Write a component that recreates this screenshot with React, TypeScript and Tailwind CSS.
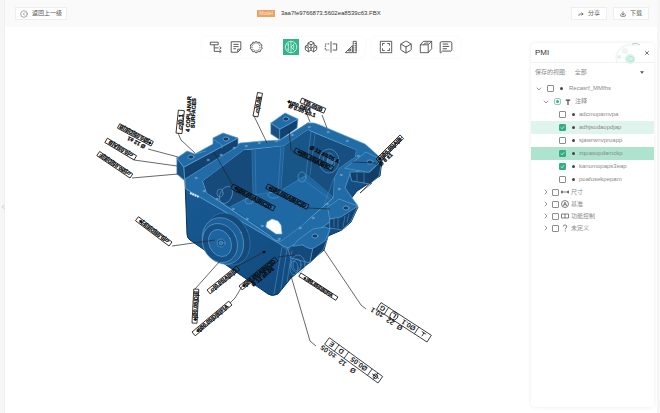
import {
  Box,
  ChevronDown,
  ChevronLeft,
  ChevronRight,
  CircleChevronLeft,
  Download,
  Forward,
  MessageSquareText,
  X,
} from 'lucide-react'
import { ReactNode } from 'react'

interface IconProps {
  children: ReactNode
}

function Icon({ children }: IconProps) {
  return (
    <svg
      viewBox="0 0 16 16"
      className="size-3.5"
      fill="none"
      stroke="currentColor"
      strokeWidth="1"
      aria-hidden="true"
    >
      {children}
    </svg>
  )
}

const toolGroups = [
  [
    {
      name: '结构',
      icon: (
        <Icon>
          <path d="M1.500 2.500h9v3h-9zM6 5.500v7.500h7M6 9h5M12 7.500l2 1.500-2 1.500M12 11.500l2 1.500-2 1.500" />
        </Icon>
      ),
    },
    {
      name: '备注',
      icon: (
        <Icon>
          <path d="M2.500 2h11v8.500L10 14H2.500zM13.500 10.500H10V14M5 5h6M5 7.500h6M5 10h3" />
        </Icon>
      ),
    },
    {
      name: '设置',
      icon: (
        <Icon>
          <path d="M8 1.500l1.800 1.300 2.200-.3.800 2.100 2 1-.5 2.200.8 2.100-1.900 1.200-.5 2.200-2.200 0L8 14.700l-1.800-1.400-2.200 0-.7-2.200-1.900-1.200.7-2.100-.5-2.200 2-1 .8-2.100 2.200.3z" />
          <circle cx="8" cy="8" r="4.500" strokeDasharray="1.500 1" />
        </Icon>
      ),
    },
  ],
  [
    {
      name: 'PMI',
      active: true,
      icon: (
        <Icon>
          <circle cx="8" cy="8" r="6.500" />
          <path d="M5 3.500v9M8 1.500v13M8 8l4-4M8 8l4 4M3 5.500h2M3 10.500h2M11 6v4" />
        </Icon>
      ),
    },
    {
      name: '装配',
      icon: (
        <Icon>
          <path d="M8 1.500l3.500 2v4L8 9.500l-3.500-2v-4zM4.500 3.500L8 5.500l3.500-2M8 5.500v4" />
          <path d="M4.500 5.500l-3 1.500v4l3.500 2.500 3-2V9.500M11.500 5.500l3 1.500v4L11 13.500l-3-2M1.500 7.500L5 9.500v4M14.500 7.500L11 9.500v4" />
        </Icon>
      ),
    },
    {
      name: '剖切',
      icon: (
        <Icon>
          <path d="M8 1.500v13M10 4.500h4.500v7H10" />
          <path d="M6 4.500H1.500v7H6" strokeDasharray="2 1" />
        </Icon>
      ),
    },
    {
      name: '测量',
      icon: (
        <Icon>
          <path d="M10.500 1.500h3.500v13h-3.500zM12 4h2M12 6.500h2M12 9h2M12 11.500h2M1.500 14.500h8v-8zM5 12.500h2.500V10z" />
        </Icon>
      ),
    },
  ],
  [
    {
      name: '全屏',
      icon: (
        <Icon>
          <path d="M1.500 1.500h13v13h-13zM4 6.500V4h2.500M9.500 4H12v2.500M12 9.500V12H9.500M6.500 12H4V9.500" />
        </Icon>
      ),
    },
    { name: '视图', icon: <Box className="size-3.5" strokeWidth={1.6} /> },
    {
      name: '透视',
      icon: (
        <Icon>
          <path d="M1.500 5.500h9v9h-9zM1.500 5.500l3.500-4h9.500l-4 4M14.500 1.500v8.500l-4 4.500M5 5.500l2-2h4" />
        </Icon>
      ),
    },
    {
      name: '评论',
      icon: <MessageSquareText className="size-3.5" strokeWidth={1.6} />,
    },
  ],
]

function Toolbar() {
  return (
    <div className="flex gap-[7px]">
      {toolGroups.map((group, index) => (
        <div
          key={index}
          className="flex items-center gap-1 rounded-sm bg-white px-1.5 py-0.5 shadow-[0_0_3px_#0000000d]"
        >
          {group.map((tool) => (
            <button
              key={tool.name}
              aria-label={tool.name}
              className={
                'active' in tool
                  ? 'flex size-4 items-center justify-center bg-[#36b489] text-[#c9f3e2]'
                  : 'flex size-4 items-center justify-center text-[#484848]'
              }
            >
              {tool.icon}
            </button>
          ))}
        </div>
      ))}
    </div>
  )
}

interface TagProps {
  x: number
  y: number
  angle: number
  width: number
  height?: number
  text: string
  framed?: boolean
}

function Tag({ x, y, angle, width, height = 5, text, framed = true }: TagProps) {
  return (
    <g transform={`translate(${x} ${y}) rotate(${angle})`}>
      {framed && (
        <rect
          width={width}
          height={height}
          fill="none"
          stroke="#111"
          strokeWidth="0.8"
        />
      )}
      <text
        x={width / 2}
        y={height - 0.5}
        fontSize={height + 0.5}
        fontWeight="700"
        textAnchor="middle"
        fill="#080a0d"
        stroke="#080a0d"
        strokeWidth="0.3"
      >
        {text}
      </text>
    </g>
  )
}

// x / y is the corner the tag turns around, angles are in degrees
const tags: TagProps[] = [
  { x: 151, y: 146, angle: 208, width: 38, text: '⌖|Ø0.05|D|E|B' },
  { x: 143, y: 149, angle: 208, width: 18, text: 'Ø 12 ±1', framed: false },
  { x: 134, y: 160, angle: 211, width: 34, text: '▱|0.05|A|B' },
  { x: 130, y: 178, angle: 214, width: 40, text: '▱|Ø0.05|D|E|F' },
  { x: 176, y: 133, angle: -84, width: 23, height: 6, text: '▱|0.1' },
  { x: 185, y: 131, angle: -87, width: 34, text: '4 COPLANAR', framed: false },
  { x: 190, y: 127, angle: -87, width: 28, text: 'SURFACES', framed: false },
  { x: 253, y: 116, angle: -79, width: 24, text: '▱|0.08' },
  { x: 302, y: 98, angle: 24, width: 26, text: 'T|0.05|B' },
  { x: 285, y: 98, angle: 20, width: 32, text: '⌖|Ø0.08|A', framed: false },
  { x: 286, y: 102, angle: 20, width: 36, text: 'Ø 0.05 ±0.1', framed: false },
  { x: 376, y: 159, angle: -45, width: 34, text: '⌖|Ø0.05|A|B' },
  { x: 378, y: 163, angle: -43, width: 16, text: 'Ø 8 ±1', framed: false },
  { x: 169, y: 246, angle: 217, width: 42, text: '▱|0.05|D|E|F|⌖' },
  { x: 207, y: 290, angle: -39, width: 38, text: '▱|0.05|A|B|D' },
  { x: 192, y: 323, angle: -87, width: 34, text: '⌖|Ø0.05|D|E' },
  { x: 192, y: 332, angle: -40, width: 48, text: '⌖|Ø0.05|D|E|F|A' },
  { x: 239, y: 286, angle: -39, width: 46, text: '⌖|Ø0.05|A|B|C|D' },
  { x: 247, y: 286, angle: -39, width: 36, text: 'Ø 12 ±0.05', framed: false },
  { x: 301, y: 273, angle: 33, width: 44, height: 4, text: '⌖|Ø0.05|D|E|F|A' },
  { x: 296, y: 148, angle: 26, width: 42, text: '⌖|Ø0.05|A|B|C' },
  { x: 308, y: 143, angle: 27, width: 40, text: 'Ø 12 ±0.05 A', framed: false },
  { x: 268, y: 184, angle: 27, width: 46, text: '⌖|Ø0.05|A|B|C|D' },
  { x: 233, y: 184, angle: 28, width: 48, text: '⌖|Ø0.05|A|B|C|D' },
]

const leaders = [
  '148,149 178,157',
  '134,160 177,166',
  '132,178 178,174',
  '178,133 181,140 195,153',
  '254,116 267,143',
  '304,107 310,122',
  '322,115 327,128',
  '376,163 352,162',
  '402,137 376,165',
  '372,183 360,193 378,175',
  '172,246 215,240',
  '195,289 220,261',
  '236,267 266,251',
  '230,303 235,298 246,280',
  '214,152 232,184',
  '289,130 291,150 296,153',
  '308,208 330,209',
  '324,250 361,305 366,309',
  '291,276 310,341 316,346',
  '278,257 294,255',
]

const holes = [
  [226, 139, 3],
  [191, 157, 3],
  [286, 119, 3],
  [370, 162, 3],
  [346, 208, 3],
  [315, 236, 3],
]

const bolts = [
  [208, 160], [221, 155], [234, 148], [246, 146], [259, 143], [276, 141],
  [292, 135], [309, 127], [328, 132], [347, 141], [358, 156], [341, 175],
  [339, 189], [196, 178], [204, 191], [217, 199], [233, 209], [247, 219],
  [262, 226], [279, 239], [300, 228], [313, 218], [327, 204],
]

function Model() {
  return (
    <svg
      viewBox="5 27 652 386"
      className="col-start-1 row-start-1 w-full"
      fontFamily="Liberation Sans, DejaVu Sans, sans-serif"
      role="img"
      aria-label="3D"
    >
      <defs>
        <linearGradient id="front" x1="0" y1="0" x2="1" y2="1">
          <stop offset="0" stopColor="#1a5f9b" />
          <stop offset="1" stopColor="#0f4373" />
        </linearGradient>
        <linearGradient id="wall" x1="0" y1="0" x2="0" y2="1">
          <stop offset="0" stopColor="#165184" />
          <stop offset="1" stopColor="#1c65a0" />
        </linearGradient>
      </defs>

      <g strokeLinejoin="round" strokeLinecap="round">
        {/* body silhouette */}
        <path
          d="M185 180L187 234Q187 238 190 240L268 294Q272 297 278 294L291 278L310 262L324 250L328 236L342 230L351 222L358 207L350 200L357 191L380 176L382 160L365 145L308 123L280 142L240 146L185 172z"
          fill="url(#front)"
          stroke="#0b3154"
          strokeWidth="1"
        />
        {/* top flange */}
        <path
          d="M185 172L240 143L263 141L280 140L308 123Q314 122 320 125L365 144L382 159L362 170L350 174L345 188L358 206L330 222L292 247Q286 249 280 244L186 189z"
          fill="#216ba6"
          stroke="#65a3d2"
          strokeWidth="0.7"
        />
        {/* inner walls */}
        <path
          d="M203 181L244 150L284 146L308 130L356 150L355 157L339 168L334 178L333 198L301 226L281 241Q276 242 270 236L207 193z"
          fill="url(#wall)"
          stroke="#70acd8"
          strokeWidth="0.8"
        />
        <path d="M203 181L244 150L252 150L253 194L230 207L207 193z" fill="#154a7a" />
        <path d="M253 150L284 146L280 190L253 195z" fill="#1c619b" />
        <path d="M284 146L308 130L313 133L308 175L280 191z" fill="#185688" />
        <path d="M313 133L356 150L355 157L339 168L334 178L333 197L308 175z" fill="#164f80" />
        <path d="M253 195L280 191L305 175L332 197L301 226L281 241L230 207z" fill="#1e68a4" />
        <path
          d="M252 150L253 197M255 150L256 195M281 147L278 190M284 147L281 188M311 132L306 175M315 134L310 175M230 207L253 195L280 191L307 175L333 197M301 178L331 200M334 178L324 205"
          fill="none"
          stroke="#4585b7"
          strokeWidth="0.6"
        />
        <g fill="none" stroke="#629fce" strokeWidth="0.6">
          <ellipse cx="226" cy="195" rx="6" ry="9" transform="rotate(25 226 195)" />
          <ellipse cx="220" cy="193" rx="3" ry="4" />
          <ellipse cx="329" cy="161" rx="10" ry="12" />
          <ellipse cx="329" cy="161" rx="6" ry="8" />
          <ellipse cx="330" cy="161" rx="3" ry="4" fill="#3476a8" />
          <ellipse cx="302" cy="177" rx="4" ry="5" />
          <ellipse cx="249" cy="201" rx="4" ry="3" />
          <ellipse cx="274" cy="195" rx="6" ry="3" />
        </g>
        <path
          d="M267 222L272 219L278 221L281 225L282 234L276 234L266 227z"
          fill="#fff"
          stroke="#77b1dc"
          strokeWidth="0.6"
        />

        {/* lugs */}
        <g stroke="#5c9ccb" strokeWidth="0.7">
          <path d="M177 158L184 167L185 181L177 174z" fill="#174f80" />
          <path d="M184 167L238 138L238 146L185 179z" fill="#124270" />
          <path d="M177 158L187 151L195 154L213 144L213 138L223 133L238 138L184 167z" fill="#216ba6" />
          <path d="M213 139L222 145L222 148M195 154L206 151" fill="none" />
          <path d="M271 123L280 129L280 140L271 134z" fill="#174f80" />
          <path d="M280 129L298 119L297 128L280 140z" fill="#124270" />
          <path d="M271 123L285 113L298 119L280 129z" fill="#216ba6" />
          <path d="M350 172L370 172L382 160L379 176L370 184L352 181z" fill="#123f69" />
          <path d="M345 168L357 159L366 152L382 160L369 172z" fill="#216ba6" />
          <path d="M330 219L341 216L358 206L351 221L342 230L330 228z" fill="#124270" />
          <path d="M328 207L339 199L358 206L341 217L330 219z" fill="#216ba6" />
          <path d="M288 248L297 243L313 249L310 263L291 258z" fill="#15497a" />
          <path d="M313 248L330 228L327 240L323 250L310 263z" fill="#113f69" />
          <path d="M293 246L298 240L313 229L325 227L330 229L325 241L314 248Q309 250 303 245z" fill="#216ba6" />
        </g>
        <path
          d="M186 189L280 244L286 249L290 249M282 247L274 294M287 249L281 289M292 251L287 282M334 219L334 227M338 218L338 228M345 216L343 227M349 214L347 222M357 174L357 181M364 173L364 183"
          fill="none"
          stroke="#4e90c1"
          strokeWidth="0.6"
        />

        {/* round boss on the front face */}
        <g stroke="#65a2d0" strokeWidth="0.6">
          <ellipse cx="228" cy="239" rx="21" ry="27" transform="rotate(-25 228 239)" fill="#15497a" stroke="#347bb0" />
          <ellipse cx="223" cy="241" rx="20" ry="24" transform="rotate(-25 223 241)" fill="#1c609a" />
          <ellipse cx="220" cy="243" rx="17" ry="20" transform="rotate(-25 220 243)" fill="#165084" />
          <ellipse cx="220" cy="243" rx="11" ry="14" transform="rotate(-25 220 243)" fill="#1c65a0" />
          <circle cx="221" cy="243" r="4" fill="#164c7c" />
          <circle cx="221" cy="243" r="2" fill="#2e75aa" />
        </g>
        <g fill="none" stroke="#5b9bca" strokeWidth="0.6">
          <ellipse cx="298" cy="264" rx="7" ry="9" />
          <ellipse cx="297" cy="265" rx="4" ry="6" />
          <ellipse cx="294" cy="268" rx="4" ry="7" />
        </g>

        {holes.map(([cx, cy, r]) => (
          <ellipse
            key={`${cx}-${cy}`}
            cx={cx}
            cy={cy}
            rx={r}
            ry={r - 1}
            fill="#113f69"
            stroke="#8abde2"
            strokeWidth="0.6"
          />
        ))}
        {bolts.map(([cx, cy]) => (
          <ellipse
            key={`${cx}-${cy}`}
            cx={cx}
            cy={cy}
            rx="1.100"
            ry="0.800"
            fill="#174f80"
            stroke="#9ccbec"
            strokeWidth="0.500"
          />
        ))}
      </g>
      <path d="M190 193l9 4" stroke="#dceefa" strokeWidth="2" strokeDasharray="2 0.500" />

      <g fill="none" stroke="#22272c" strokeWidth="0.700">
        {leaders.map((points) => (
          <polyline key={points} points={points} />
        ))}
      </g>
      <path d="M262 251l4 0-2 3z" fill="#0c0f14" />
      {tags.map((tag) => (
        <Tag key={`${tag.x}-${tag.y}`} {...tag} />
      ))}

      {/* the two readable callouts, lettered upside down */}
      <g transform="translate(378 383) rotate(216)" fontSize="7" fontWeight="700" fill="#16191d">
        <path
          d="M0 0h66v8H0zM13 0v8M42 0v8M54 0v8"
          fill="none"
          stroke="#22272c"
          strokeWidth="0.800"
        />
        <circle cx="6" cy="4" r="2.200" fill="none" stroke="#16191d" strokeWidth="0.800" />
        <path d="M2 4h8M6 0v8" stroke="#16191d" strokeWidth="0.800" />
        <text x="17" y="6.500">Ø0.05</text>
        <text x="46" y="6.500">D</text>
        <text x="58" y="6.500">E</text>
      </g>
      <g transform="translate(353 375) rotate(217)" fontSize="7" fontWeight="700" fill="#16191d">
        <text x="0" y="6">Ø</text>
        <text x="12" y="6">12</text>
        <text x="25" y="6">±0.05</text>
      </g>
      <g transform="translate(427 342) rotate(213)" fontSize="7" fontWeight="700" fill="#16191d">
        <path
          d="M0 0h60v8H0zM15 0v8M51 0v8"
          fill="none"
          stroke="#22272c"
          strokeWidth="0.800"
        />
        <path d="M5 6h5M7.500 6V2" stroke="#16191d" strokeWidth="0.800" />
        <text x="17" y="6.500">Ø0.1</text>
        <circle cx="42" cy="4" r="4" fill="none" stroke="#16191d" strokeWidth="0.800" />
        <text x="40" y="6.500">L</text>
        <text x="53" y="6.500">G</text>
      </g>
      <g transform="translate(400 332) rotate(213)" fontSize="7" fontWeight="700" fill="#16191d">
        <text x="0" y="6">Ø</text>
        <text x="10" y="6">22</text>
        <text x="23" y="6">±0.1</text>
      </g>
    </svg>
  )
}

interface CheckProps {
  id: string
  checked?: boolean
  partial?: boolean
}

function Check({ id, checked, partial }: CheckProps) {
  return (
    <span className="grid shrink-0 place-items-center">
      <input
        id={id}
        type="checkbox"
        defaultChecked={checked}
        className={
          partial
            ? 'col-start-1 row-start-1 size-[7px] appearance-none rounded-[2px] border border-[#8ad3b9] bg-white'
            : 'col-start-1 row-start-1 size-[7px] appearance-none rounded-[1px] border border-[#8d8d8d] bg-white checked:border-[#35ad84] checked:bg-[#35ad84]'
        }
      />
      {checked && (
        <svg
          viewBox="0 0 6 6"
          className="pointer-events-none col-start-1 row-start-1 size-[5px]"
          fill="none"
          stroke="#d9f5ea"
        >
          <path d="M1 3l1.500 1.500L5 1.500" />
        </svg>
      )}
      {partial && (
        <span className="pointer-events-none col-start-1 row-start-1 size-[3px] rounded-full bg-[#35ad84]" />
      )}
    </span>
  )
}

const notes = [
  { name: 'adcmopamvpa' },
  { name: 'adhjsodaopdjap', checked: true, row: 'bg-[#def4ec]' },
  { name: 'sjawrwnvproapp' },
  { name: 'zqoasopdamckp', checked: true, row: 'bg-[#aee3cf]' },
  { name: 'kanomopaps3eap', checked: true },
  { name: 'poafosekpepam' },
]

const categories = [
  {
    name: '尺寸',
    icon: <path d="M1 5v6M15 5v6M1 8h14M4 6L1 8l3 2M12 6l3 2-3 2" />,
  },
  {
    name: '基准',
    icon: (
      <>
        <circle cx="8" cy="8" r="7" />
        <path d="M4.500 12L8 4l3.500 8M6 9.500h4" />
      </>
    ),
  },
  {
    name: '功能控制',
    icon: <path d="M1 4h14v8H1zM8 4v8" />,
  },
  {
    name: '未定义',
    icon: <path d="M4.500 5Q5 1.500 8.500 2T11.500 6Q11 8 8.500 9v2M8.500 13v2" />,
  },
]

function PmiPanel() {
  return (
    <aside className="z-10 col-start-1 row-start-1 mt-4 mr-[3px] mb-1.5 flex w-[123px] flex-col justify-self-end rounded-sm bg-white shadow-[0_0_4px_#00000014]">
      <div className="flex h-5 items-center justify-between border-b border-[#f2f2f2] px-1">
        <h2 className="text-[8px] text-[#333]">PMI</h2>
        <span className="flex items-center">
          <svg viewBox="0 0 32 28" className="h-7 w-8" fill="none" aria-hidden="true">
            <path d="M5 23Q2 15 9 9T25 7" stroke="#f0f7f4" strokeWidth="2" />
            <path d="M20 5Q24 3 28 6" stroke="#c3c9c6" />
            <circle cx="18" cy="20" r="5" fill="#d5f3e8" />
            <path d="M15 21q3-6 6-2t-5 3" stroke="#b1e5d1" />
            <circle cx="7" cy="18" r="2" fill="#e4efea" />
            <circle cx="13" cy="12" r="3" fill="#eef4f1" />
          </svg>
          <button aria-label="关闭" className="text-[#444]">
            <X className="size-1.5" strokeWidth={3} />
          </button>
        </span>
      </div>

      <div className="flex h-[19px] items-center gap-2 px-1 text-[6px] text-[#8c8c8c]">
        <label htmlFor="view">保存的视图:</label>
        <div className="grid flex-1 items-center">
          <select
            id="view"
            className="col-start-1 row-start-1 w-full appearance-none bg-transparent"
          >
            <option>全部</option>
          </select>
          <svg
            viewBox="0 0 6 4"
            className="pointer-events-none col-start-1 row-start-1 mr-1.5 h-[3px] w-1 justify-self-end fill-[#555]"
          >
            <path d="M0 0h6L3 4z" />
          </svg>
        </div>
      </div>

      <ul className="text-[6px] leading-[13px] text-[#8a8a8a]">
        <li className="flex h-[13px] items-center gap-1 pl-1">
          <ChevronDown className="size-2 text-[#666]" />
          <Check id="root-node" />
          <span className="mx-0.5 size-[3px] rounded-full bg-[#444]" />
          <label htmlFor="root-node">Recasrf_MMfhs</label>
        </li>
        <li className="flex h-[13px] items-center gap-1 pl-[11px]">
          <ChevronDown className="size-2 text-[#666]" />
          <Check id="notes" partial />
          <svg viewBox="0 0 8 8" className="size-1.5" fill="none" stroke="#444" strokeWidth="1.500">
            <path d="M1 1.500h6M4 1.500V8" />
          </svg>
          <label htmlFor="notes">注释</label>
        </li>
        {notes.map((note) => (
          <li key={note.name} className={note.row}>
            <div className="flex h-[13px] items-center gap-1 pl-7">
              <Check id={note.name} checked={note.checked} />
              <span className="ml-0.5 size-[3px] rounded-full bg-[#444]" />
              <label htmlFor={note.name}>{note.name}</label>
            </div>
          </li>
        ))}
        {categories.map((category) => (
          <li key={category.name} className="flex h-3 items-center gap-0.5 pl-[11px]">
            <ChevronRight className="size-2 text-[#666]" />
            <Check id={category.name} />
            <svg
              viewBox="0 0 16 16"
              className="size-2"
              fill="none"
              stroke="#555"
              strokeWidth="1.500"
              aria-hidden="true"
            >
              {category.icon}
            </svg>
            <label htmlFor={category.name}>{category.name}</label>
          </li>
        ))}
      </ul>
    </aside>
  )
}

export default function App() {
  return (
    <div className="flex min-h-screen bg-[#f6f6f6] pr-[3px] font-['Liberation_Sans','Noto_Sans_CJK_SC',sans-serif]">
      <div className="flex w-[5px] shrink-0 items-center border-r border-[#efefef]">
        <button aria-label="展开" className="text-[#999]">
          <ChevronLeft className="size-1.5" />
        </button>
      </div>
      <div className="flex min-w-0 flex-1 flex-col">
        <header className="flex h-[27px] items-center justify-between bg-[#fafafa] pr-2 pl-2.5 text-[#555]">
          <button className="flex h-[13px] items-center gap-1 border border-[#eee] bg-white px-1 text-[6px]">
            <CircleChevronLeft className="size-2" strokeWidth={1.5} />
            返回上一级
          </button>
          <div className="flex items-center gap-1.5">
            <span className="bg-[#e9a366] px-0.5 text-[5px] leading-[7px] text-[#fbe6d2]">
              Model
            </span>
            <h1 className="text-[6px] text-[#333]">3aa7fe9766873.5602ea8539c63.FBX</h1>
          </div>
          <div className="flex gap-1.5 text-[6px]">
            <button className="flex h-[13px] items-center gap-1 border border-[#eee] bg-white px-1.5">
              <Forward className="size-1.5" strokeWidth={3} />
              分享
            </button>
            <button className="flex h-[13px] items-center gap-1 border border-[#eee] bg-white px-1.5">
              <Download className="size-1.5" strokeWidth={3} />
              下载
            </button>
          </div>
        </header>
        <main className="grid flex-1 bg-white">
          <Model />
          <div className="z-10 col-start-1 row-start-1 mt-2.5 self-start justify-self-center">
            <Toolbar />
          </div>
          <PmiPanel />
        </main>
      </div>
    </div>
  )
}
